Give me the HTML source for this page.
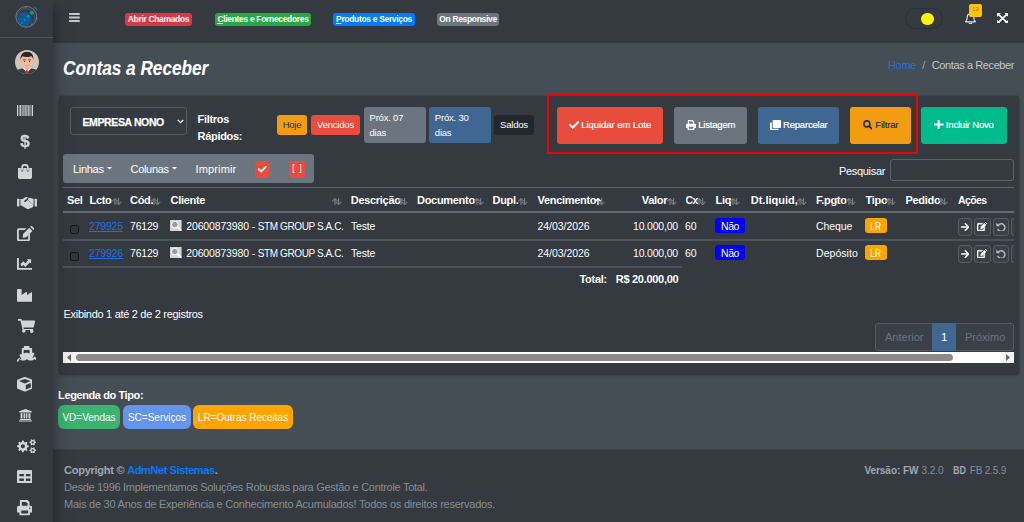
<!DOCTYPE html>
<html lang="pt-br">
<head>
<meta charset="utf-8">
<title>Contas a Receber</title>
<style>
*{box-sizing:border-box}
html,body{margin:0;padding:0}
body{width:1024px;height:522px;overflow:hidden;background:#454d55;color:#fff;font-family:"Liberation Sans",sans-serif;font-size:11px;letter-spacing:-.3px;position:relative;line-height:1}
.abs{position:absolute}
a{color:inherit;text-decoration:none}
b,.b{font-weight:700}
svg{display:block}
/* sidebar */
#sidebar{left:0;top:0;width:53px;height:522px;background:#343a40;box-shadow:0 10px 21px rgba(0,0,0,.25),0 7px 8px rgba(0,0,0,.22);z-index:5}
#brand{left:0;top:0;width:53px;height:38px;border-bottom:1px solid #4b545c}
.sic{position:absolute;left:0;width:53px;display:flex;justify-content:center;align-items:center;height:20px}
/* navbar */
#navbar{left:53px;top:0;width:971px;height:43px;background:#343a40}
.nb{position:absolute;top:13px;height:13px;border-radius:3px;font-weight:700;font-size:8.5px;letter-spacing:-.33px;line-height:13px;text-align:center;color:#fff;white-space:nowrap}
/* header */
#title{left:63px;top:55.500px;font-size:20px;font-weight:700;font-style:italic;letter-spacing:0;transform:scaleX(.86);transform-origin:0 0;line-height:24px;white-space:nowrap;text-shadow:0 0 1px rgba(255,255,255,.25)}
#crumb{right:10px;top:58px;font-size:11px;line-height:15px;white-space:nowrap;color:#c2c7d0}
/* card */
#card{left:58.800px;top:96px;width:960px;height:277.600px;background:#343a40;border-radius:3px;box-shadow:0 0 1px rgba(0,0,0,.3),0 1px 3px rgba(0,0,0,.35)}
.btn{font-size:9.5px;letter-spacing:-.2px;position:absolute;border-radius:3px;color:#fff;white-space:nowrap;display:flex;align-items:center;justify-content:center}
.t{position:absolute;white-space:nowrap;line-height:14px}
.q{font-size:9.5px;letter-spacing:-.2px}
.th{font-weight:700;top:193px}
.r1{top:218.500px}.r2{top:245.500px}
.r1,.r2{font-size:10.5px;letter-spacing:-.2px}
.so{top:194px;font-size:10px;letter-spacing:-3px;color:#727a82;font-weight:700;line-height:14px}
.cb{width:9px;height:9px;border:1px solid #15171a;border-radius:2px;background:#31363c}
.lupa{width:11.600px;height:11px}
.bdg{height:15.500px;border-radius:3px;text-align:center;line-height:16.500px;font-size:10.500px;letter-spacing:-.4px;white-space:nowrap;margin-top:.5px}
.ab{height:17.500px;border:1px solid #555d65;border-radius:3px;background:#3a4047;display:flex;align-items:center;justify-content:center}
.lg{top:404.700px;height:24px;border-radius:6px;text-align:center;line-height:26px;font-size:10px;letter-spacing:0;white-space:nowrap}
/* footer */
#footer{left:53px;top:449px;width:971px;height:73px;background:#343a40;border-top:1px solid #3b4249;color:#868e96}
</style>
</head>
<body>

<!-- NAVBAR -->
<div id="navbar" class="abs">
  <!-- nav icons (coords relative to navbar: x-53) -->
  <svg class="abs" style="left:16.200px;top:13.200px" width="10.800" height="9" viewBox="0 0 10.800 9" fill="#c7cacd"><rect width="10.800" height="1.900" rx=".4"/><rect y="3.550" width="10.800" height="1.900" rx=".4"/><rect y="7.100" width="10.800" height="1.900" rx=".4"/></svg>
  <div class="abs" style="left:852px;top:8px;width:38px;height:21px;border:1px solid #2a2f34;border-radius:11px"></div>
  <div class="abs" style="left:868.200px;top:12.500px;width:12.600px;height:12.600px;border-radius:50%;background:#fff200"></div>
  <svg class="abs" style="left:911.500px;top:12.500px" width="11" height="11.500" viewBox="0 0 11 11.500" fill="none" stroke="#e8eaec" stroke-width="1.100"><path d="M5.500 .9c-2 0-3.300 1.500-3.300 3.500 0 2.200-.7 3.200-1.500 3.900-.2.200-.1.600.2.600h9.200c.3 0 .4-.4.200-.6-.8-.7-1.500-1.700-1.500-3.900 0-2-1.300-3.500-3.300-3.500z"/><path d="M4.300 9.700a1.200 1.200 0 0 0 2.400 0" /></svg>
  <div class="abs" style="left:916px;top:4px;width:12.500px;height:13px;border-radius:2px;background:#ffc107;color:#a97a05;font-size:6px;letter-spacing:0;line-height:11px;text-align:center">13</div>
  <svg class="abs" style="left:944px;top:12.500px" width="11.300" height="10.700" viewBox="0 0 11.300 10.700" fill="#fff"><path d="M0 0h4L0 4zM11.300 0v4L7.300 0zM0 10.700v-4l4 4zM11.300 10.700h-4l4-4z"/><path d="M1.500 1.400l8.300 7.900M9.800 1.400L1.500 9.300" stroke="#fff" stroke-width="1.700"/></svg>
  <div class="nb" style="left:72px;width:67px;background:#dc3545">Abrir Chamados</div>
  <div class="nb" style="left:162px;width:96px;background:#28a745"><u>C</u>lientes e Fornecedores</div>
  <div class="nb" style="left:280px;width:82px;background:#007bff"><u>P</u>rodutos e Serviços</div>
  <div class="nb" style="left:384px;width:62px;background:#6c757d">On Responsive</div>
</div>

<!-- SIDEBAR -->
<div id="sidebar" class="abs">
  <div id="brand" class="abs"></div>
  <svg class="abs" style="left:16.7px;top:104.5px" width="16" height="11.5" viewBox="0 0 16 11.5" fill="#d3d6d9"><rect x="0" y="0" width="1.1" height="11.5"/><rect x="1.9" y="0" width="0.6" height="11.5"/><rect x="3.1" y="0" width="1.2" height="11.5"/><rect x="5.0" y="0" width="0.6" height="11.5"/><rect x="6.2" y="0" width="0.6" height="11.5"/><rect x="7.5" y="0" width="1.2" height="11.5"/><rect x="9.4" y="0" width="0.6" height="11.5"/><rect x="10.6" y="0" width="1.2" height="11.5"/><rect x="12.5" y="0" width="0.6" height="11.5"/><rect x="13.7" y="0" width="0.6" height="11.5"/><rect x="14.9" y="0" width="1.1" height="11.5"/></svg>
  <div class="abs b" style="left:20px;top:132px;width:10px;font-size:17px;line-height:19px;letter-spacing:0;color:#d3d6d9;-webkit-text-stroke:.35px #d3d6d9;will-change:transform;text-align:center">$</div>
  <svg class="abs" style="left:17.7px;top:164.3px" width="14.2" height="15.2" viewBox="0 0 14.2 15.2" fill="#d3d6d9"><path d="M0 4.100h14v8.900a2.200 2.200 0 0 1-2.200 2.200H2.200A2.200 2.200 0 0 1 0 13z"/><path d="M4.100 6.400V3.700a2.900 2.900 0 0 1 5.800 0v2.700" fill="none" stroke="#d3d6d9" stroke-width="1.700"/><path d="M2.900 4.100v2.400M5.300 4.100v2.400M8.700 4.100v2.400M11.100 4.100v2.400" stroke="#343a40" stroke-width=".5" opacity=".7"/><circle cx="4.100" cy="7" r=".65" fill="#343a40"/><circle cx="9.900" cy="7" r=".65" fill="#343a40"/></svg>
  <svg class="abs" style="left:16.5px;top:196.5px" width="20" height="12.2" viewBox="0 0 20 12.2" fill="#d3d6d9"><rect x="0" y="1.8" width="2.4" height="7.6" rx=".4"/><rect x="17.6" y="1.8" width="2.4" height="7.6" rx=".4"/><path d="M3.4 2h2.2L8 .4C8.6 0 9.3 0 9.9.2l2 .8h.3L10.6.9 7.3 3.8c-.7.7.4 1.8 1.300.9L10.700 3l5.300 4.500c.700.600.7 1.500.1 2.100l-.5.300c-.2.700-.9 1.100-1.500.900-.3.700-1.100 1-1.800.700-.5.700-1.400.900-2.100.400L4.400 8.500H3.400z"/><path d="M11.300 1.200l1.700-.4 3.600 1.300V8l-.500-.600L11 3z"/></svg>
  <svg class="abs" style="left:16.7px;top:225.7px" width="17.3" height="15.2" viewBox="0 0 17.3 15.2" fill="#d3d6d9"><path d="M2 2.200h7.500L7.700 4H2.400a.6.600 0 0 0-.6.600v8.200c0 .300.300.6.600.6h8.200c.300 0 .6-.3.600-.6V9.300l1.800-1.800v5.700a2 2 0 0 1-2 2H2a2 2 0 0 1-2-2V4.200a2 2 0 0 1 2-2z"/><path d="M12.300 1.700l3.200 3.200-6.300 6.300-3.500.5.400-3.600zM13.200.8l.5-.5a1.100 1.100 0 0 1 1.500 0l1.700 1.700a1.100 1.100 0 0 1 0 1.500l-.5.500z"/></svg>
  <svg class="abs" style="left:16.7px;top:257.8px" width="15.4" height="11.8" viewBox="0 0 15.4 11.8" fill="#d3d6d9"><path d="M0 0h1.900v9.900h13.500v1.900H0z"/><path d="M3.400 6.100L6.300 3.200 8.300 5.200 11 2.500 9.800 1.300h4.300v4.300L12.900 4.400 8.300 9 6.300 7 4.700 8.600z"/></svg>
  <svg class="abs" style="left:16.7px;top:289px" width="15.7" height="12.7" viewBox="0 0 15.7 12.7" fill="#d3d6d9"><path d="M0 .6C0 .3.300 0 .6 0h3.400c.3 0 .6.300.6.600V6l4.500-2.900c.400-.2.900 0 .9.500V6l4.800-2.900c.400-.2.900 0 .9.500v8.500c0 .3-.3.600-.6.600H.600a.6.600 0 0 1-.6-.6z"/></svg>
  <svg class="abs" style="left:17.7px;top:318.8px" width="17.2" height="14.2" viewBox="0 0 17.2 14.2" fill="#d3d6d9"><path d="M0 0h3.100c.300 0 .6.200.6.500l.2 1h12.600c.4 0 .7.400.6.800l-1.300 5.800c-.1.300-.3.500-.6.500H5.500l.3 1.300h8.700c.4 0 .7.400.6.800l-.1.400a1.700 1.700 0 1 1-2.500 0H7.300a1.700 1.700 0 1 1-2.700-.3L2.500 1.700H0z"/></svg>
  <svg class="abs" style="left:16.7px;top:345.7px" width="19.3" height="16" viewBox="0 0 19.3 16" fill="#d3d6d9"><path d="M7.400 0h4.500c.3 0 .6.300.6.600v1.500h1.900c.4 0 .7.300.7.700v3.600l1.800.600c.4.100.6.600.4 1l-2 3.900c.9-.2 1.700-.7 2.200-1.400h.6c.3.900 1 1.500 1.800 1.800v1.900c-1-.1-1.900-.6-2.600-1.300-1 1-2.300 1.500-3.700 1.500-1.400 0-2.700-.5-3.700-1.500-1 1-2.300 1.500-3.700 1.500s-2.700-.5-3.700-1.500C1.900 15.200 1 15.700 0 15.800v-1.900c.8-.3 1.500-.9 1.800-1.800h.6c.5.700 1.300 1.200 2.200 1.400L2.600 9.600c-.2-.4 0-.9.400-1l1.800-.6V2.800c0-.4.300-.7.700-.7h1.300V.6c0-.3.300-.6.600-.6zM6.700 4v3.400l2.900-.9 3 .9V4z" fill-rule="evenodd"/></svg>
  <svg class="abs" style="left:16.7px;top:377.4px" width="15.7" height="14.6" viewBox="0 0 15.7 14.6" fill="#d3d6d9"><path d="M7.400.1c.3-.1.600-.1.900 0l6.600 2.500c.5.200.8.600.8 1.100v7c0 .5-.3.900-.7 1.100l-6.600 2.700c-.3.100-.7.100-1 0L.7 11.800C.3 11.600 0 11.200 0 10.700v-7c0-.5.300-.9.800-1.100zM7.850 1.900L2 4.100l5.850 2.400 5.850-2.400zM8.800 12.400l5-2V5.900l-5 2.100z" fill-rule="evenodd"/></svg>
  <svg class="abs" style="left:18.8px;top:409px" width="12.9" height="12.6" viewBox="0 0 12.9 12.6" fill="#d3d6d9"><path d="M6.450 0l6.200 2.300v1.100H.25V2.300zM1.600 4.200h1.900v5.200H1.600zM4.600 4.200h1.500v5.200H4.600zM6.900 4.200h1.500v5.200H6.900zM9.500 4.200h1.900v5.200H9.500zM.9 10h11.200v1.100H.9zM0 11.500h12.900v1.100H0z"/></svg>
  <svg class="abs" style="left:16.7px;top:438.8px" width="19.3" height="14.6" viewBox="0 0 19.3 14.6" fill="#d3d6d9"><path fill-rule="evenodd" d="M11.76 6.58 L11.76 8.02 L10.14 8.48 L9.73 9.46 L10.55 10.93 L9.53 11.95 L8.06 11.13 L7.08 11.54 L6.62 13.16 L5.18 13.16 L4.72 11.54 L3.74 11.13 L2.27 11.95 L1.25 10.93 L2.07 9.46 L1.66 8.48 L0.04 8.02 L0.04 6.58 L1.66 6.12 L2.07 5.14 L1.25 3.67 L2.27 2.65 L3.74 3.47 L4.72 3.06 L5.18 1.44 L6.62 1.44 L7.08 3.06 L8.06 3.47 L9.53 2.65 L10.55 3.67 L9.73 5.14 L10.14 6.12Z M3.80 7.30a2.1 2.1 0 1 0 4.2 0a2.1 2.1 0 1 0 -4.2 0z"/><path fill-rule="evenodd" d="M18.96 2.77 L18.96 3.83 L17.95 4.15 L17.56 4.82 L17.79 5.85 L16.87 6.39 L16.09 5.67 L15.31 5.67 L14.53 6.39 L13.61 5.85 L13.84 4.82 L13.45 4.15 L12.44 3.83 L12.44 2.77 L13.45 2.45 L13.84 1.78 L13.61 0.75 L14.53 0.21 L15.31 0.93 L16.09 0.93 L16.87 0.21 L17.79 0.75 L17.56 1.78 L17.95 2.45Z M14.60 3.30a1.1 1.1 0 1 0 2.2 0a1.1 1.1 0 1 0 -2.2 0z"/><path fill-rule="evenodd" d="M18.96 10.77 L18.96 11.83 L17.95 12.15 L17.56 12.82 L17.79 13.85 L16.87 14.39 L16.09 13.67 L15.31 13.67 L14.53 14.39 L13.61 13.85 L13.84 12.82 L13.45 12.15 L12.44 11.83 L12.44 10.77 L13.45 10.45 L13.84 9.78 L13.61 8.75 L14.53 8.21 L15.31 8.93 L16.09 8.93 L16.87 8.21 L17.79 8.75 L17.56 9.78 L17.95 10.45Z M14.60 11.30a1.1 1.1 0 1 0 2.2 0a1.1 1.1 0 1 0 -2.2 0z"/></svg>
  <svg class="abs" style="left:16.6px;top:469.9px" width="15.7" height="13.4" viewBox="0 0 15.7 13.4" fill="#d3d6d9"><path fill-rule="evenodd" d="M1.500 0h12.700a1.500 1.500 0 0 1 1.500 1.500v10.400a1.500 1.500 0 0 1-1.500 1.500H1.500A1.500 1.500 0 0 1 0 11.900V1.500A1.500 1.500 0 0 1 1.500 0zM2.300 3.900v2.400h4.600V3.900zM8.900 3.900v2.400h4.500V3.900zM2.300 8.500v2.500h4.600V8.500zM8.900 8.500v2.500h4.500V8.500z"/></svg>
  <svg class="abs" style="left:16.9px;top:500.3px" width="15.4" height="15.3" viewBox="0 0 15.4 15.3" fill="#d3d6d9"><path fill-rule="evenodd" d="M2.900 0h7.600l2 2v3.700h-1.900V2.900H9.500V1.900H4.800v3.800H2.900zM1.900 5.700h11.600a1.900 1.900 0 0 1 1.900 1.900v4.300c0 .3-.2.500-.5.500h-1.900v2.400c0 .3-.2.500-.5.500H2.900a.5.500 0 0 1-.5-.5v-2.400H.500a.5.500 0 0 1-.5-.5V7.600a1.900 1.900 0 0 1 1.900-1.900zM4.300 10.500v2.900h6.800v-2.900zM12.800 7.500a.7.700 0 1 0 0 1.400.7.700 0 0 0 0-1.400z"/></svg>
  <svg class="abs" style="left:13.800px;top:4px" width="26" height="26" viewBox="0 0 26 26">
    <circle cx="12.300" cy="12.800" r="10.400" fill="none" stroke="#8a9299" stroke-width=".7"/>
    <circle cx="11.800" cy="13.600" r="9" fill="none" stroke="#6d757c" stroke-width=".5"/>
    <circle cx="10.700" cy="15.100" r="6.900" fill="#0d5a9c"/>
    <circle cx="17.800" cy="8.700" r="2" fill="#1993a8"/><circle cx="14" cy="12.300" r="1.400" fill="#1993a8"/>
    <circle cx="10.600" cy="15.800" r="1.100" fill="#1993a8"/><circle cx="7.800" cy="18.900" r=".9" fill="#1993a8"/>
    <circle cx="11.800" cy="3.200" r=".9" fill="#1993a8"/><circle cx="23" cy="14.600" r=".9" fill="#1993a8"/>
    <circle cx="17.600" cy="20.200" r=".8" fill="#1993a8"/><path d="M20.300 3.600l2.600 2.900.7-.6-2.400-2.800z" fill="#1993a8"/>
  </svg>
  <svg class="abs" style="left:14.800px;top:49.700px" width="24" height="24" viewBox="0 0 24 24">
    <defs><clipPath id="av"><circle cx="12" cy="12" r="12"/></clipPath></defs>
    <g clip-path="url(#av)">
      <rect width="24" height="24" fill="#cdc6be"/>
      <path d="M0 24c0-3.500 3-5 7.500-5.600h9C21 19 24 20.500 24 24z" fill="#3a3b40"/>
      <path d="M7.800 18.300l4.200 4.700 4.200-4.700-1.700-1H9.500z" fill="#fff"/>
      <path d="M11.200 20.300h1.600l.8 3.700h-3.200z" fill="#dc2430"/>
      <path d="M9.300 14h5.400v4.300L12 20.300l-2.700-2z" fill="#e3a485"/>
      <circle cx="5.500" cy="11.300" r="1.300" fill="#eeb190"/><circle cx="18.500" cy="11.300" r="1.300" fill="#eeb190"/>
      <ellipse cx="12" cy="10.800" rx="6.200" ry="7.400" fill="#f4bb9b"/>
      <path d="M5.700 10.300C4.900 4.700 7.800 1.700 12 1.700s7.100 3 6.300 8.600c-.3-2-.8-3.300-1.600-4.100-2.300 1-7.100 1-9.400 0-.8.800-1.300 2.100-1.600 4.100z" fill="#2b2624"/>
      <path d="M7.900 9.600h3v.7h-3zM13.100 9.600h3v.7h-3z" fill="#3b2a22"/>
      <circle cx="9.400" cy="11.600" r=".6" fill="#2b2624"/><circle cx="14.600" cy="11.600" r=".6" fill="#2b2624"/>
      <path d="M10.500 15.300h3" stroke="#c98266" stroke-width=".6"/>
    </g>
  </svg>
</div>

<!-- CONTENT HEADER -->
<div id="title" class="abs">Contas a Receber</div>
<div class="t" style="left:888px;top:58px;color:#1f6fe0;letter-spacing:-.34px">Home</div>
<div class="t" style="left:922.300px;top:58px;color:#9aa2aa">/</div>
<div class="t" style="left:931.800px;top:58px;color:#c2c7d0;letter-spacing:-.4px">Contas a Receber</div>

<!-- CARD -->
<div id="card" class="abs"></div>


<!-- CARD CONTENT (page coordinates) -->
<div id="cc" class="abs" style="left:0;top:0;width:1024px;height:522px">
  <!-- select -->
  <div class="abs" style="left:70px;top:106.500px;width:117px;height:28.300px;border:1px solid #535b63;border-radius:3px"></div>
  <div class="t b" style="left:82.500px;top:114.500px;font-size:10.5px;letter-spacing:-.38px;-webkit-text-stroke:.25px">EMPRESA NONO</div>
  <svg class="abs" style="left:177px;top:119px" width="7" height="5" viewBox="0 0 7 5"><path d="M.8 1l2.7 2.7L6.2 1" fill="none" stroke="#fff" stroke-width="1.3"/></svg>
  <div class="t b" style="left:197.500px;top:111.500px">Filtros</div>
  <div class="t b" style="left:197.500px;top:128.500px">Rápidos:</div>
  <!-- quick filters -->
  <div class="btn" style="left:277px;top:114.500px;width:30px;height:20.500px;background:#f39c12;color:#1f2d3d">Hoje</div>
  <div class="btn" style="left:311px;top:114.500px;width:49px;height:20.500px;background:#e74c3c">Vencidos</div>
  <div class="btn" style="left:364px;top:107px;width:62px;height:36px;background:#6c757d"></div>
  <div class="t q" style="left:369.500px;top:110.500px">Próx. 07</div><div class="t q" style="left:369.500px;top:125.500px">dias</div>
  <div class="btn" style="left:429px;top:107px;width:62px;height:36px;background:#3f6791"></div>
  <div class="t q" style="left:434.800px;top:110.500px">Próx. 30</div><div class="t q" style="left:434.800px;top:125.500px">dias</div>
  <div class="btn" style="left:494px;top:114.500px;width:40px;height:20.500px;background:#23272b">Saldos</div>
  <!-- big buttons -->
  <div class="btn" style="left:557px;top:107px;width:106px;height:37px;letter-spacing:-.05px;padding-bottom:1.500px;-webkit-text-stroke:.2px;background:#e74c3c"><svg width="10.300" height="7.800" viewBox="0 0 10.300 7.800" style="margin-right:2px"><path d="M1 3.900l2.800 2.700L9.300 1.100" fill="none" stroke="#fff" stroke-width="2" stroke-linecap="square"/></svg>Liquidar em Lote</div>
  <div class="btn" style="left:674px;top:107px;width:73px;height:37px;padding-bottom:1.500px;-webkit-text-stroke:.2px;background:#6c757d"><svg width="10" height="10" viewBox="0 0 15.400 15.300" fill="#fff" style="margin-right:2.500px"><path fill-rule="evenodd" d="M2.900 0h7.600l2 2v3.700h-1.900V2.900H9.500V1.900H4.800v3.800H2.900zM1.900 5.700h11.600a1.900 1.900 0 0 1 1.900 1.900v4.300c0 .3-.2.500-.5.500h-1.900v2.400c0 .3-.2.500-.5.500H2.900a.5.500 0 0 1-.5-.5v-2.400H.500a.5.500 0 0 1-.5-.5V7.600a1.900 1.900 0 0 1 1.900-1.900zM4.300 10.500v2.900h6.800v-2.900zM12.800 7.500a.7.700 0 1 0 0 1.400.7.700 0 0 0 0-1.400z"/></svg>Listagem</div>
  <div class="btn" style="left:758px;top:107px;width:81px;height:37px;padding-bottom:1.500px;-webkit-text-stroke:.2px;background:#3f6791"><svg width="11" height="10.500" viewBox="0 0 11 10.500" fill="#fff" style="margin-right:2.500px"><rect x="2.600" y="0" width="8.400" height="8" rx="1"/><path d="M1 2.500h.8v5.300c0 .6.400 1 1 1h5.700v.7c0 .6-.4 1-1 1H1c-.6 0-1-.4-1-1v-6c0-.6.400-1 1-1z"/></svg>Reparcelar</div>
  <div class="btn" style="left:850px;top:107px;width:61px;height:37px;padding-bottom:1.500px;-webkit-text-stroke:.2px;background:#f39c12;color:#1f2d3d"><svg width="9.600" height="9.600" viewBox="0 0 9.600 9.600" style="margin-right:3px"><circle cx="3.900" cy="3.900" r="3" fill="none" stroke="#1f2d3d" stroke-width="1.600"/><path d="M6.200 6.200l2.700 2.700" stroke="#1f2d3d" stroke-width="1.900" stroke-linecap="round"/></svg>Filtrar</div>
  <div class="btn" style="left:921px;top:107px;width:86px;height:37px;padding-bottom:1.500px;-webkit-text-stroke:.2px;background:#00bc8c"><svg width="9.200" height="9.200" viewBox="0 0 9.200 9.200" style="margin-right:2.300px"><path d="M4.600 .4v8.400M.4 4.600h8.400" stroke="#fff" stroke-width="2" stroke-linecap="round"/></svg>Incluir Novo</div>
  <!-- toolbar -->
  <div class="abs" style="left:63px;top:154px;width:251px;height:29px;background:#6c757d;border-radius:3px"></div>
  <div class="t" style="left:73px;top:162px;font-size:11px;letter-spacing:-.3px">Linhas</div>
  <div class="t" style="left:130.500px;top:162px;font-size:11px;letter-spacing:-.3px">Colunas</div>
  <div class="t" style="left:195.500px;top:162px;font-size:11px;letter-spacing:.15px">Imprimir</div>
  <svg class="abs" style="left:107px;top:167.300px" width="5" height="2.600" viewBox="0 0 5 2.600"><path d="M0 0h5L2.500 2.600z" fill="#fff"/></svg>
  <svg class="abs" style="left:171.700px;top:167.300px" width="5" height="2.600" viewBox="0 0 5 2.600"><path d="M0 0h5L2.500 2.600z" fill="#fff"/></svg>
  <div class="abs" style="left:254.800px;top:161px;width:15.700px;height:16.500px;background:#e74c3c;border-radius:2px;display:flex;align-items:center;justify-content:center"><svg width="8.500" height="6.500" viewBox="0 0 10.300 7.800"><path d="M1 3.900l2.800 2.700L9.300 1.100" fill="none" stroke="#fff" stroke-width="2.200" stroke-linecap="square"/></svg></div>
  <div class="abs" style="left:288.500px;top:161px;width:16.800px;height:16.500px;background:#e74c3c;border-radius:2px;text-align:center;font-size:9px;line-height:15.500px;letter-spacing:1px;text-indent:1px">[ ]</div>
  <!-- search -->
  <div class="t" style="left:839px;top:163.500px;font-size:11px;letter-spacing:-.32px">Pesquisar</div>
  <div class="abs" style="left:890px;top:159px;width:124px;height:22px;border:1px solid #5a636b;border-radius:3px"></div>
  <!-- table -->
  <div class="abs" style="left:63px;top:187px;width:951px;height:1px;background:#5f6870"></div>
  <div class="abs" style="left:63px;top:211.200px;width:951px;height:2.200px;background:#636c74"></div>
  <div class="abs" style="left:63px;top:239px;width:951px;height:2px;background:#4a525b"></div>
  <div class="abs" style="left:63px;top:266px;width:618.800px;height:2px;background:#4a525b"></div>
  <!-- table header -->
  <div class="t th" style="left:67px">Sel</div>
  <div class="t th" style="left:89.5px">Lcto</div>
  <svg class="abs" style="left:112.1px;top:197.500px" width="9.600" height="7.200" viewBox="0 0 9.600 7.200" fill="none" stroke-width="1.300"><path d="M6.600 0v6.600M3.900 3.900l2.700 2.700 2.700-2.700" stroke="#70787f"/><path d="M3 7.200V.6M.3 3.300L3 .6l2.700 2.700" stroke="#70787f"/></svg>
  <div class="t th" style="left:130px">Cód.</div>
  <svg class="abs" style="left:151.1px;top:197.500px" width="9.600" height="7.200" viewBox="0 0 9.600 7.200" fill="none" stroke-width="1.300"><path d="M6.600 0v6.600M3.900 3.900l2.700 2.700 2.700-2.700" stroke="#70787f"/><path d="M3 7.200V.6M.3 3.300L3 .6l2.700 2.700" stroke="#70787f"/></svg>
  <div class="t th" style="left:170.5px">Cliente</div>
  <svg class="abs" style="left:332.1px;top:197.500px" width="9.600" height="7.200" viewBox="0 0 9.600 7.200" fill="none" stroke-width="1.300"><path d="M6.600 0v6.600M3.900 3.900l2.700 2.700 2.700-2.700" stroke="#70787f"/><path d="M3 7.200V.6M.3 3.300L3 .6l2.700 2.700" stroke="#70787f"/></svg>
  <div class="t th" style="left:350.75px">Descrição</div>
  <svg class="abs" style="left:398.1px;top:197.500px" width="9.600" height="7.200" viewBox="0 0 9.600 7.200" fill="none" stroke-width="1.300"><path d="M6.600 0v6.600M3.900 3.900l2.700 2.700 2.700-2.700" stroke="#70787f"/><path d="M3 7.200V.6M.3 3.300L3 .6l2.700 2.700" stroke="#70787f"/></svg>
  <div class="t th" style="left:417px">Documento</div>
  <svg class="abs" style="left:474.1px;top:197.500px" width="9.600" height="7.200" viewBox="0 0 9.600 7.200" fill="none" stroke-width="1.300"><path d="M6.600 0v6.600M3.900 3.900l2.700 2.700 2.700-2.700" stroke="#70787f"/><path d="M3 7.200V.6M.3 3.300L3 .6l2.700 2.700" stroke="#70787f"/></svg>
  <div class="t th" style="left:492.5px">Dupl.</div>
  <svg class="abs" style="left:518.1px;top:197.500px" width="9.600" height="7.200" viewBox="0 0 9.600 7.200" fill="none" stroke-width="1.300"><path d="M6.600 0v6.600M3.900 3.900l2.700 2.700 2.700-2.700" stroke="#70787f"/><path d="M3 7.200V.6M.3 3.300L3 .6l2.700 2.700" stroke="#70787f"/></svg>
  <div class="t th" style="left:537.5px">Vencimento</div>
  <svg class="abs" style="left:595.1px;top:197.500px" width="9.600" height="7.200" viewBox="0 0 9.600 7.200" fill="none" stroke-width="1.300"><path d="M6.600 0v6.600M3.900 3.900l2.700 2.700 2.700-2.700" stroke="#70787f"/><path d="M3 7.200V.6M.3 3.300L3 .6l2.700 2.700" stroke="#fff"/></svg>
  <div class="t th" style="left:641.75px">Valor</div>
  <svg class="abs" style="left:667.1px;top:197.500px" width="9.600" height="7.200" viewBox="0 0 9.600 7.200" fill="none" stroke-width="1.300"><path d="M6.600 0v6.600M3.900 3.900l2.700 2.700 2.700-2.700" stroke="#70787f"/><path d="M3 7.200V.6M.3 3.300L3 .6l2.700 2.700" stroke="#70787f"/></svg>
  <div class="t th" style="left:685.5px;font-size:10.500px;letter-spacing:-.55px">Cx</div>
  <svg class="abs" style="left:696.1px;top:197.500px" width="9.600" height="7.200" viewBox="0 0 9.600 7.200" fill="none" stroke-width="1.300"><path d="M6.600 0v6.600M3.900 3.900l2.700 2.700 2.700-2.700" stroke="#70787f"/><path d="M3 7.200V.6M.3 3.300L3 .6l2.700 2.700" stroke="#70787f"/></svg>
  <div class="t th" style="left:715.5px">Liq</div>
  <svg class="abs" style="left:730.1px;top:197.500px" width="9.600" height="7.200" viewBox="0 0 9.600 7.200" fill="none" stroke-width="1.300"><path d="M6.600 0v6.600M3.900 3.900l2.700 2.700 2.700-2.700" stroke="#70787f"/><path d="M3 7.200V.6M.3 3.300L3 .6l2.700 2.700" stroke="#70787f"/></svg>
  <div class="t th" style="left:750.75px;letter-spacing:0">Dt.liquid,</div>
  <svg class="abs" style="left:797.1px;top:197.500px" width="9.600" height="7.200" viewBox="0 0 9.600 7.200" fill="none" stroke-width="1.300"><path d="M6.600 0v6.600M3.900 3.900l2.700 2.700 2.700-2.700" stroke="#70787f"/><path d="M3 7.200V.6M.3 3.300L3 .6l2.700 2.700" stroke="#70787f"/></svg>
  <div class="t th" style="left:816px">F.pgto</div>
  <svg class="abs" style="left:846.1px;top:197.500px" width="9.600" height="7.200" viewBox="0 0 9.600 7.200" fill="none" stroke-width="1.300"><path d="M6.600 0v6.600M3.900 3.900l2.700 2.700 2.700-2.700" stroke="#70787f"/><path d="M3 7.200V.6M.3 3.300L3 .6l2.700 2.700" stroke="#70787f"/></svg>
  <div class="t th" style="left:865.5px">Tipo</div>
  <svg class="abs" style="left:886.1px;top:197.500px" width="9.600" height="7.200" viewBox="0 0 9.600 7.200" fill="none" stroke-width="1.300"><path d="M6.600 0v6.600M3.900 3.900l2.700 2.700 2.700-2.700" stroke="#70787f"/><path d="M3 7.200V.6M.3 3.300L3 .6l2.700 2.700" stroke="#70787f"/></svg>
  <div class="t th" style="left:905.5px">Pedido</div>
  <svg class="abs" style="left:938.1px;top:197.500px" width="9.600" height="7.200" viewBox="0 0 9.600 7.200" fill="none" stroke-width="1.300"><path d="M6.600 0v6.600M3.900 3.900l2.700 2.700 2.700-2.700" stroke="#70787f"/><path d="M3 7.200V.6M.3 3.300L3 .6l2.700 2.700" stroke="#70787f"/></svg>
  <div class="t th" style="left:958px;font-size:10.500px;letter-spacing:-.62px">Ações</div>
  <!-- row -->
  <div class="abs cb" style="left:70px;top:225px"></div>
  <div class="t r1" style="left:89px;color:#1f6fe0;text-decoration:underline">279925</div>
  <div class="t r1" style="left:130px">76129</div>
  <div class="abs lupa" style="left:170px;top:220px"><svg width="11.600" height="11" viewBox="0 0 11.600 11"><rect width="11.600" height="11" fill="#d6d6d6"/><circle cx="4.800" cy="4.600" r="3.300" fill="#9c9c9c" stroke="#fff" stroke-width="1"/><path d="M7.400 7.200l3.300 3" stroke="#fff" stroke-width="1.700" stroke-linecap="round"/></svg></div>
  <div class="t r1" style="left:186.300px;letter-spacing:-.15px">20600873980 - <span style="font-size:10px;letter-spacing:-.4px">STM GROUP S.A.C.</span></div>
  <div class="t r1" style="left:351px">Teste</div>
  <div class="t r1" style="left:537.500px;letter-spacing:-.05px">24/03/2026</div>
  <div class="t r1" style="left:578px;width:100px;text-align:right">10.000,00</div>
  <div class="t r1" style="left:685px">60</div>
  <div class="abs bdg" style="left:715px;top:217px;width:30px;background:#0000ff">Não</div>
  <div class="t r1" style="left:816px;letter-spacing:-.1px">Cheque</div>
  <div class="abs bdg" style="left:865px;top:217px;width:22px;background:#ffa500"><span style="display:inline-block;transform:scaleX(.8);letter-spacing:0">LR</span></div>
  <div class="abs ab" style="left:958px;top:218px;width:14px"><svg width="8.400" height="8.200" viewBox="0 0 8.400 8.200"><path d="M.6 4.100h6.600M4.300 .8l3.300 3.300-3.300 3.300" fill="none" stroke="#fff" stroke-width="1.500" stroke-linecap="round" stroke-linejoin="round"/></svg></div>
  <div class="abs ab" style="left:974px;top:218px;width:17px"><svg width="10.300" height="9" viewBox="0 0 17.300 15.200" fill="#fff"><path d="M2 2.200h7.500L7.700 4H2.400a.6.600 0 0 0-.6.600v8.200c0 .300.300.6.600.6h8.200c.300 0 .6-.3.600-.6V9.300l1.800-1.800v5.700a2 2 0 0 1-2 2H2a2 2 0 0 1-2-2V4.200a2 2 0 0 1 2-2z" stroke="#fff" stroke-width=".8"/><path d="M12.300 1.700l3.200 3.200-6.300 6.300-3.500.5.400-3.600zM13.200.8l.5-.5a1.100 1.100 0 0 1 1.500 0l1.700 1.700a1.100 1.100 0 0 1 0 1.500l-.5.500z"/></svg></div>
  <div class="abs ab" style="left:993px;top:218px;width:16px"><svg width="9.500" height="9.200" viewBox="0 0 9.500 9.200"><path d="M2.300 3.300A3.700 3.700 0 1 1 2 7.300" fill="none" stroke="#b4b8bc" stroke-width="1.500" stroke-linecap="round"/><path d="M.3 .6v3.700h3.700z" fill="#b4b8bc"/></svg></div>
  <div class="abs ab" style="left:1011px;top:218px;width:3px;border-right:0;border-radius:3px 0 0 3px"></div>
  <!-- row -->
  <div class="abs cb" style="left:70px;top:252px"></div>
  <div class="t r2" style="left:89px;color:#1f6fe0;text-decoration:underline">279926</div>
  <div class="t r2" style="left:130px">76129</div>
  <div class="abs lupa" style="left:170px;top:247px"><svg width="11.600" height="11" viewBox="0 0 11.600 11"><rect width="11.600" height="11" fill="#d6d6d6"/><circle cx="4.800" cy="4.600" r="3.300" fill="#9c9c9c" stroke="#fff" stroke-width="1"/><path d="M7.400 7.200l3.300 3" stroke="#fff" stroke-width="1.700" stroke-linecap="round"/></svg></div>
  <div class="t r2" style="left:186.300px;letter-spacing:-.15px">20600873980 - <span style="font-size:10px;letter-spacing:-.4px">STM GROUP S.A.C.</span></div>
  <div class="t r2" style="left:351px">Teste</div>
  <div class="t r2" style="left:537.500px;letter-spacing:-.05px">24/03/2026</div>
  <div class="t r2" style="left:578px;width:100px;text-align:right">10.000,00</div>
  <div class="t r2" style="left:685px">60</div>
  <div class="abs bdg" style="left:715px;top:244px;width:30px;background:#0000ff">Não</div>
  <div class="t r2" style="left:816px;letter-spacing:.05px">Depósito</div>
  <div class="abs bdg" style="left:865px;top:244px;width:22px;background:#ffa500"><span style="display:inline-block;transform:scaleX(.8);letter-spacing:0">LR</span></div>
  <div class="abs ab" style="left:958px;top:245px;width:14px"><svg width="8.400" height="8.200" viewBox="0 0 8.400 8.200"><path d="M.6 4.100h6.600M4.300 .8l3.300 3.300-3.300 3.300" fill="none" stroke="#fff" stroke-width="1.500" stroke-linecap="round" stroke-linejoin="round"/></svg></div>
  <div class="abs ab" style="left:974px;top:245px;width:17px"><svg width="10.300" height="9" viewBox="0 0 17.300 15.200" fill="#fff"><path d="M2 2.200h7.500L7.700 4H2.400a.6.600 0 0 0-.6.600v8.200c0 .300.300.6.600.6h8.200c.300 0 .6-.3.600-.6V9.300l1.800-1.800v5.700a2 2 0 0 1-2 2H2a2 2 0 0 1-2-2V4.200a2 2 0 0 1 2-2z" stroke="#fff" stroke-width=".8"/><path d="M12.300 1.700l3.200 3.200-6.300 6.300-3.500.5.400-3.600zM13.200.8l.5-.5a1.100 1.100 0 0 1 1.500 0l1.700 1.700a1.100 1.100 0 0 1 0 1.500l-.5.500z"/></svg></div>
  <div class="abs ab" style="left:993px;top:245px;width:16px"><svg width="9.500" height="9.200" viewBox="0 0 9.500 9.200"><path d="M2.300 3.300A3.700 3.700 0 1 1 2 7.300" fill="none" stroke="#b4b8bc" stroke-width="1.500" stroke-linecap="round"/><path d="M.3 .6v3.700h3.700z" fill="#b4b8bc"/></svg></div>
  <div class="abs ab" style="left:1011px;top:245px;width:3px;border-right:0;border-radius:3px 0 0 3px"></div>
  <div class="t b" style="left:579.500px;top:272.300px">Total:</div>
  <div class="t b" style="left:578.300px;top:272.300px;width:100px;text-align:right">R$ 20.000,00</div>
  <div class="t" style="left:63.500px;top:307px">Exibindo 1 até 2 de 2 registros</div>
  <!-- pagination -->
  <div class="abs" style="left:875.400px;top:323.300px;width:138.500px;height:27.500px;border:1px solid #525a62;border-radius:3px;background:#3a4047"></div>
  <div class="abs" style="left:932.300px;top:323.300px;width:24px;height:27.400px;background:#3f6791"></div>
  <div class="t" style="left:885px;top:330px;color:#6c757d;font-size:11px;letter-spacing:0">Anterior</div>
  <div class="t" style="left:932px;top:330px;width:24px;text-align:center;font-size:11.5px">1</div>
  <div class="t" style="left:965px;top:330px;color:#6c757d;font-size:11px;letter-spacing:0">Próximo</div>
  <!-- scrollbar -->
  <div class="abs" style="left:63px;top:352px;width:951px;height:10.800px;background:linear-gradient(90deg,#f2f2f2 0,#f2f2f2 11px,#fff 14px,#fff 937px,#f2f2f2 940px)"></div>
  <div class="abs" style="left:76px;top:354px;width:877px;height:7px;background:#8b8b8b;border-radius:4px"></div>
  <svg class="abs" style="left:67px;top:354px" width="4" height="7" viewBox="0 0 4 7"><path d="M4 0v7L0 3.5z" fill="#666"/></svg>
  <svg class="abs" style="left:1006px;top:354px" width="4" height="7" viewBox="0 0 4 7"><path d="M0 0v7l4-3.5z" fill="#666"/></svg>
  <!-- legend -->
  <div class="t b" style="left:58.100px;top:387.500px;letter-spacing:-.4px">Legenda do Tipo:</div>
  <div class="abs lg" style="left:58px;width:62px;background:#3cb371">VD=Vendas</div>
  <div class="abs lg" style="left:123px;width:68px;background:#6495ed">SC=Serviços</div>
  <div class="abs lg" style="left:193px;width:100px;background:#ffa500">LR=Outras Receitas</div>
</div>

<!-- annotation -->
<div class="abs" style="left:547px;top:93.500px;width:371px;height:60px;border:2px solid #f00000;z-index:9"></div>

<!-- FOOTER -->
<div id="footer" class="abs">
  <div class="t" style="left:11px;top:13.0px;color:#a0a8b0;letter-spacing:-.25px"><b>Copyright © <a style="color:#007bff;letter-spacing:-.4px">AdmNet Sistemas</a>.</b></div>
  <div class="t" style="left:11px;top:29.7px">Desde 1996 Implementamos Soluções Robustas para Gestão e Controle Total.</div>
  <div class="t" style="left:11px;top:46.5px;letter-spacing:-.245px">Mais de 30 Anos de Experiência e Conhecimento Acumulados! Todos os direitos reservados.</div>
  <div class="t b" style="left:811.400px;top:14.0px;color:#a0a8b0;font-size:10px;letter-spacing:-.04px">Versão: FW</div>
  <div class="t" style="left:868.400px;top:14.0px;font-size:10px;letter-spacing:-.03px">3.2.0</div>
  <div class="t b" style="left:900.100px;top:14.0px;color:#a0a8b0;font-size:10px;letter-spacing:0;transform:scaleX(.9);transform-origin:0 0">BD</div>
  <div class="t" style="left:916.800px;top:14.0px;font-size:10px;letter-spacing:-.2px">FB 2.5.9</div>
</div>

</body>
</html>
